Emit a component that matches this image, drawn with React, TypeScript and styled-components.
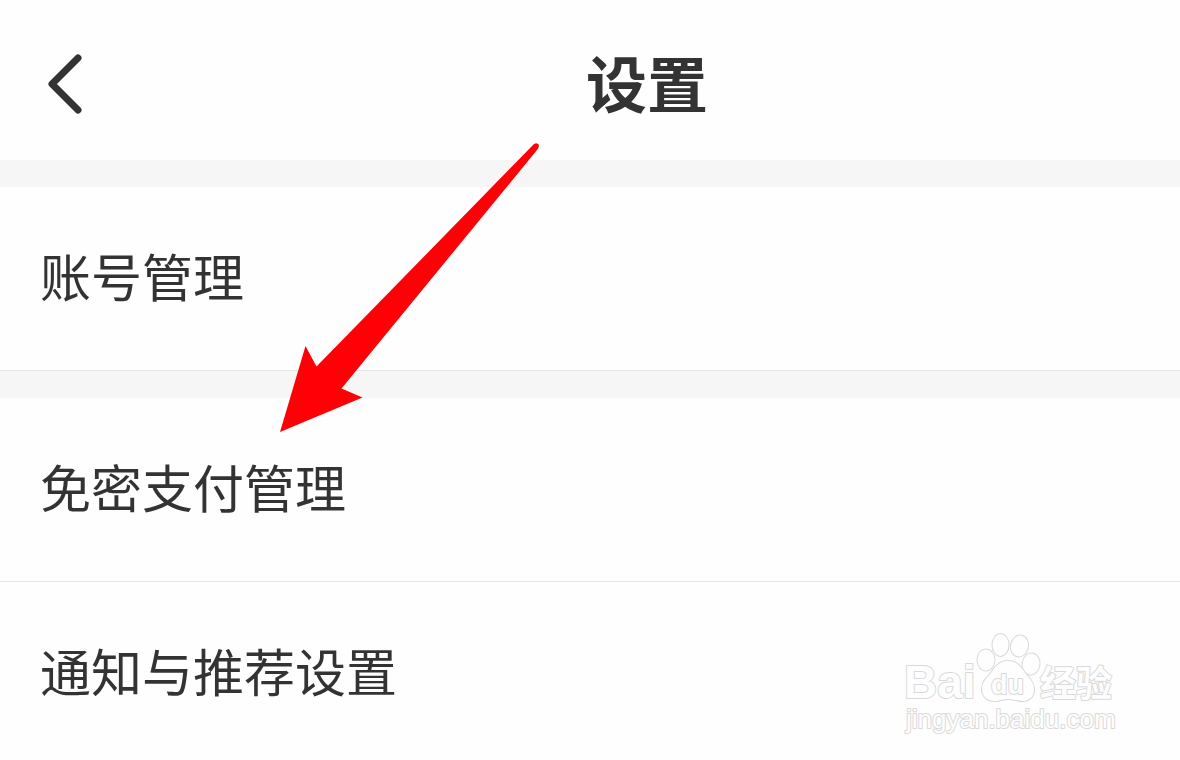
import React from "react";
import styled, { createGlobalStyle } from "styled-components";

const GlobalStyle = createGlobalStyle`
  * { box-sizing: border-box; }
  body {
    margin: 0;
    background: #fefefe;
    color: #333;
    font-family: "Noto Sans CJK SC", "Liberation Sans", sans-serif;
    overflow-x: hidden;
  }
`;

const Page = styled.div`
  position: relative;
  min-height: 100vh;
  overflow: hidden;
`;

const Header = styled.header`
  display: grid;
  grid-template-columns: 154px 1fr 40px;
  align-items: center;
  height: 160px;
  padding-top: 8px;
`;

const BackButton = styled.button`
  display: flex;
  justify-self: start;
  margin-left: 40px;
  padding: 0;
  border: 0;
  background: none;
  color: #333;
  cursor: pointer;
`;

const Title = styled.h1`
  margin: 0;
  padding-bottom: 4px;
  font-size: 61px;
  line-height: 88px;
  font-weight: 700;
  text-align: center;
`;

const Group = styled.ul`
  margin: 0;
  padding: 0;
  list-style: none;
  border-top: 27px solid #f6f6f6;
`;

const Item = styled.li`
  border-bottom: 1px solid #e4e4e4;
`;

const RowButton = styled.button`
  display: flex;
  align-items: center;
  width: 100%;
  height: 183px;
  padding: 0 40px 8px;
  border: 0;
  background: none;
  color: #333;
  font: inherit;
  font-size: 51px;
  line-height: 76px;
  text-align: left;
  cursor: pointer;
`;

const Arrow = styled.svg`
  position: absolute;
  left: 280px;
  top: 140px;
  pointer-events: none;
`;

const Watermark = styled.svg`
  position: absolute;
  left: 900px;
  top: 628px;
  pointer-events: none;
  paint-order: stroke;
  fill: #fefefe;
  stroke: #d9d9d9;
  stroke-width: 2px;
  stroke-linejoin: round;
  font-family: "Liberation Sans", "Noto Sans CJK SC", sans-serif;
`;

const groups = [["账号管理"], ["免密支付管理", "通知与推荐设置"]];

export default function App() {
  return (
    <Page>
      <GlobalStyle />
      <Header>
        <BackButton aria-label="返回">
          <svg width="48" height="64" viewBox="0 0 48 64" fill="none" stroke="currentColor" strokeWidth="7" strokeLinecap="round" strokeLinejoin="round">
            <path d="M38 6L12 32L38 58" />
          </svg>
        </BackButton>
        <Title>设置</Title>
      </Header>
      <main>
        {groups.map((items) => (
          <Group key={items[0]}>
            {items.map((label) => (
              <Item key={label}>
                <RowButton>{label}</RowButton>
              </Item>
            ))}
          </Group>
        ))}
      </main>
      <Arrow width="262" height="294" viewBox="0 0 262 294" aria-hidden="true">
        <path fill="#ff0006" d="M0 292L25.500 206L36.500 226.500L254 4Q257 2 259 5Q259 8 257 10L61.500 248.500L82.500 257.500Z" />
      </Arrow>
      <Watermark width="224" height="112" viewBox="0 0 224 112">
        <text x="4" y="70" fontSize="46" fontWeight="700">Bai</text>
        <ellipse cx="86" cy="32" rx="8.500" ry="10.500" />
        <ellipse cx="100.500" cy="17" rx="8" ry="11" />
        <ellipse cx="119.500" cy="18" rx="8.500" ry="10.500" transform="rotate(12 119.500 18)" />
        <ellipse cx="131" cy="36" rx="8.500" ry="10.500" transform="rotate(8 131 36)" />
        <path d="M108 33C99 33 95 39 91 45C86 51 82 54 82 61C82 69 88 73 94 73C100 73 103 71 108 71C114 71 117 73 123 73C130 73 134 68 134 61C134 54 129 50 125 45C121 39 117 33 108 33Z" />
        <text x="91" y="66" fontSize="27" fontWeight="700">du</text>
        <text x="140" y="69" fontSize="36" fontWeight="700">经验</text>
        <text x="6" y="100" fontSize="26">jingyan.baidu.com</text>
      </Watermark>
    </Page>
  );
}
